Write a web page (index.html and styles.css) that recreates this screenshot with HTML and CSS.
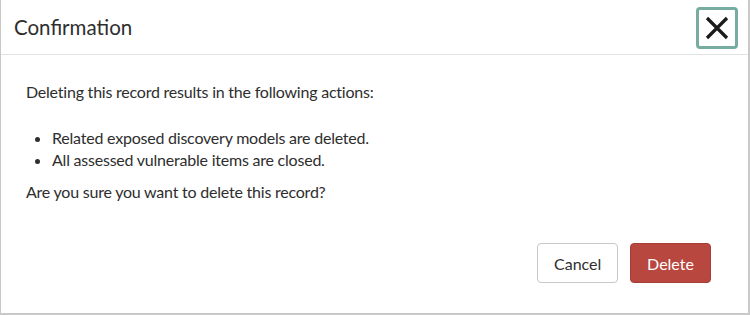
FILE: index.html
```html
<!DOCTYPE html>
<html>
<head>
<meta charset="utf-8">
<link rel="stylesheet" href="styles.css">
</head>
<body>
<div class="dialog">
  <div class="header">
    <h1 class="title">Confirmation</h1>
    <button class="close" aria-label="Close">
      <svg width="24" height="24" viewBox="0 0 24 24"><path d="M2 2 L22 22 M22 2 L2 22" stroke="#1a1a1a" stroke-width="3.2" fill="none"/></svg>
    </button>
  </div>
  <div class="body">
    <p class="lead">Deleting this record results in the following actions:</p>
    <ul class="list">
      <li>Related exposed discovery models are deleted.</li>
      <li>All assessed vulnerable items are closed.</li>
    </ul>
    <p class="question">Are you sure you want to delete this record?</p>
  </div>
  <div class="footer">
    <button class="btn btn-default">Cancel</button>
    <button class="btn btn-danger">Delete</button>
  </div>
</div>
</body>
</html>
```
FILE: styles.css
```css
html, body {
  margin: 0;
  padding: 0;
  background: #ffffff;
}
body {
  font-family: "Lato", "Open Sans", sans-serif;
  color: #2e2e2e;
}
.dialog {
  box-sizing: border-box;
  width: 750px;
  height: 315px;
  border: 1px solid #c9c9c9;
  border-top: none;
  border-right-width: 2px;
  border-bottom-width: 2px;
  background: #fff;
  display: flex;
  flex-direction: column;
}
.header {
  height: 54px;
  border-bottom: 1px solid #e2e2e2;
  display: flex;
  align-items: center;
  justify-content: space-between;
  padding: 0 10px 0 13px;
}
.title {
  margin: 0;
  font-size: 20.5px;
  font-weight: 400;
  color: #2e2e2e;
}
.close {
  width: 42px;
  height: 42px;
  border: 3px solid #78aca3;
  border-radius: 4px;
  background: #fff;
  display: flex;
  align-items: center;
  justify-content: center;
  padding: 0;
  margin-top: 2px;
}
.close svg { display: block; }
.body {
  padding: 26px 25px 0;
  font-size: 16px;
  line-height: 22px;
  letter-spacing: -0.22px;
}
.lead {
  margin: 0 0 24px;
}
.list {
  margin: 0;
  padding-left: 26px;
}
.question {
  margin: 10px 0 0;
}
.footer {
  display: flex;
  justify-content: flex-end;
  gap: 12px;
  padding: 0 37px 0 0;
  margin-top: 40px;
}
.btn {
  font-family: "Lato", "Open Sans", sans-serif;
  font-size: 16px;
  height: 40px;
  padding: 0 16px;
  border-radius: 4px;
  cursor: pointer;
}
.btn-default {
  background: #fff;
  border: 1px solid #c8c8c8;
  color: #2e2e2e;
  width: 81px;
}
.btn-danger {
  background: #b8473f;
  border: 1px solid #a53d36;
  color: #fff;
  width: 81px;
}
```
